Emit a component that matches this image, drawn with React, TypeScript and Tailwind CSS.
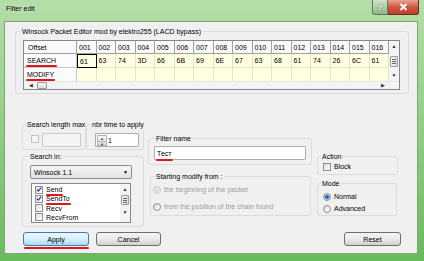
import React from "react";

const heads = ["001", "002", "003", "004", "005", "006", "007", "008", "009", "010", "011", "012", "013", "014", "015", "016"];
const bytes = ["61", "63", "74", "3D", "66", "6B", "69", "6E", "67", "63", "68", "61", "74", "26", "6C", "61"];

// red marker strokes drawn over the screenshot
function Mark({ className }: { className: string }) {
  return <span className={`absolute h-[2px] rounded-full bg-[#e3141b] ${className}`} />;
}

function Check({ on = false, dim = false }: { on?: boolean; dim?: boolean }) {
  return (
    <span
      className={`flex h-[8px] w-[8px] shrink-0 items-center justify-center border ${
        dim ? "border-[#c4c4c4] bg-[#f4f4f4]" : "border-[#8e8f8f] bg-linear-to-br from-[#dcdcdc] to-white"
      }`}
    >
      {on && (
        <svg width="7" height="7" viewBox="0 0 7 7">
          <path d="M1 3.6 L2.8 5.4 L6 1.2" fill="none" stroke="#21469b" strokeWidth="1.4" />
        </svg>
      )}
    </span>
  );
}

function Radio({ on = false, dim = false }: { on?: boolean; dim?: boolean }) {
  return (
    <span
      className={`flex h-[8px] w-[8px] shrink-0 items-center justify-center rounded-full border ${
        dim ? "border-[#c8c8c8] bg-[#f3f3f3]" : "border-[#8e8f8f] bg-linear-to-br from-[#dadada] to-white"
      }`}
    >
      {on && <span className="h-[4px] w-[4px] rounded-full bg-[#2f62ab] ring-1 ring-[#9fc0e6]" />}
      {dim && <span className="h-[4px] w-[4px] rounded-full bg-[#dcdcdc]" />}
    </span>
  );
}

// legend offset is measured from the fieldset's padding edge, hence the negative margins below
function Box({
  label,
  className,
  legend,
  children,
}: {
  label: string;
  className: string;
  legend: string;
  children?: React.ReactNode;
}) {
  return (
    <fieldset className={`min-w-0 rounded-[3px] border border-[#dcdcdc] ${className}`}>
      <legend className={`whitespace-nowrap px-[1px] leading-[9px] ${legend}`}>{label}</legend>
      {children}
    </fieldset>
  );
}

function Button({ label, main = false, className }: { label: string; main?: boolean; className: string }) {
  return (
    <div
      className={`relative flex h-[14px] items-center justify-center rounded-[3px] border ${
        main
          ? "border-[#3c7fb1] bg-linear-to-b from-[#eaf6fd] via-[#d9f0fc] to-[#a7d9f5]"
          : "border-[#707070] bg-linear-to-b from-[#f2f2f2] via-[#ebebeb] to-[#cfcfcf]"
      } ${className}`}
    >
      {label}
    </div>
  );
}

export default function App() {
  return (
    <div className="flex h-[261px] w-[424px] flex-col overflow-hidden bg-linear-to-b from-[#b4dea8] via-[#8fce82] to-[#69bb5b] font-['Liberation_Sans',Arial,sans-serif] text-[7px] leading-[9px] text-black">
      {/* title bar */}
      <div className="flex h-[22px] shrink-0 items-start">
        <span className="ml-[6px] mt-[4px] text-[7px] [text-shadow:0_0_4px_#e6f5e0]">Filter edit</span>
        <div className="ml-auto mr-[5px] flex">
          <div className="flex h-[15px] w-[16px] items-center justify-center rounded-bl-[3px] border border-t-0 border-[#5b7f55] bg-linear-to-b from-[#cfe5c8] to-[#8fb787] text-[8px] font-bold text-white [text-shadow:0_0_2px_#3b5a36]">
            ?
          </div>
          <div className="flex h-[15px] w-[31px] items-center justify-center rounded-br-[3px] border border-l-0 border-t-0 border-[#6d2a22] bg-linear-to-b from-[#e7a597] via-[#d0543f] to-[#c23b28]">
            <svg width="9" height="8" viewBox="0 0 9 8">
              <path d="M1.5 1 L7.5 7 M7.5 1 L1.5 7" stroke="white" strokeWidth="2" />
            </svg>
          </div>
        </div>
      </div>

      {/* client area */}
      <div className="ml-[5px] mr-[7px] flex h-[231px] flex-col bg-[#f0f0f0] outline outline-1 outline-[#7fa277]">
        <Box
          label="Winsock Packet Editor mod by elektro255 (LACD bypass)"
          className="ml-[10px] mt-[5px] w-[394px] pb-[3px] pl-[7px] pt-[4px]"
          legend="-ml-[3px] px-[2px]"
        >
          <div className="flex w-[377px] flex-col border border-[#828790] bg-white">
            <div className="flex">
              <div className="grid grid-cols-[53px_repeat(16,19.5px)] grid-rows-[13px_14px_13px]">
                <div className="flex items-center border-b border-r border-[#a0a0a0] bg-[#f9f9f9] pl-[4px]">Offset</div>
                {heads.map((h) => (
                  <div key={h} className="flex items-center border-b border-r border-[#a0a0a0] bg-[#f9f9f9] pl-[2px]">
                    {h}
                  </div>
                ))}
                <div className="relative flex items-center border-b border-r border-[#c8c8c8] bg-[#fbfbfb] pl-[3px]">
                  <span className="relative">
                    SEARCH
                    <Mark className="-bottom-[2px] -left-[1px] -right-[1px]" />
                  </span>
                </div>
                {bytes.map((b, i) => (
                  <div
                    key={i}
                    className={`flex items-center bg-[#ffffe1] pl-[2px] ${
                      i === 0 ? "border border-black" : "border-b border-r border-[#e3e3cb]"
                    }`}
                  >
                    {b}
                  </div>
                ))}
                <div className="relative flex items-center border-r border-[#c8c8c8] bg-[#fbfbfb] pl-[3px]">
                  <span className="relative">
                    MODIFY
                    <Mark className="-bottom-[2px] -left-[1px] -right-[1px]" />
                  </span>
                </div>
                {heads.map((h) => (
                  <div key={h} className="border-r border-[#e3e3cb] bg-[#ffffe1]" />
                ))}
              </div>
              {/* vertical scrollbar */}
              <div className="flex w-[10px] flex-col items-center bg-[#f4f4f4] text-[#333]">
                <span className="mt-[3px] text-[5px] leading-[5px]">▲</span>
                <div className="mt-[7px] flex h-[11px] w-[8px] flex-col items-center justify-center gap-[1px] rounded-[1px] border border-[#9c9c9c] bg-linear-to-r from-[#f8f8f8] to-[#dcdcdc]">
                  <span className="h-px w-[4px] bg-[#666]" />
                  <span className="h-px w-[4px] bg-[#666]" />
                  <span className="h-px w-[4px] bg-[#666]" />
                </div>
                <span className="mt-[6px] text-[5px] leading-[5px]">▼</span>
              </div>
            </div>
            {/* horizontal scrollbar */}
            <div className="flex h-[8px] items-center border-t border-[#e6e6e6] bg-[#f4f4f4] text-[#333]">
              <span className="ml-[5px] text-[5px] leading-[5px]">◀</span>
              <span className="ml-[4px] h-[7px] w-[10px] rounded-[1px] border border-[#9c9c9c] bg-linear-to-b from-[#f8f8f8] to-[#dcdcdc]" />
              <span className="ml-auto mr-[14px] text-[5px] leading-[5px]">▶</span>
            </div>
          </div>
        </Box>

        <div className="flex items-start">
          {/* left column */}
          <div className="ml-[17px] flex w-[122px] flex-col">
            <div className="mt-[26px] flex">
              <Box label="Search length max" className="h-[30px] w-[64px] pl-[8px] pt-[4px]" legend="-ml-[5px]">
                <div className="flex items-start">
                  <span className="mt-[2px]">
                    <Check dim />
                  </span>
                  <span className="ml-[3px] h-[14px] w-[39px] rounded-[1px] border border-[#c9c9c9] bg-[#f4f4f4]" />
                </div>
              </Box>
              <Box label="nbr time to apply" className="h-[30px] w-[58px] pl-[8px] pt-[4px]" legend="-ml-[4px]">
                <div className="flex h-[14px] w-[44px] items-center rounded-[1px] border border-[#abadb3] bg-white pl-px">
                  <div className="flex h-[11px] w-[10px] flex-col border border-[#b5b5b5] bg-linear-to-b from-[#f6f6f6] to-[#d8d8d8] text-[4px] leading-[5px] text-[#444]">
                    <span className="flex flex-1 items-center justify-center border-b border-[#b5b5b5]">▲</span>
                    <span className="flex flex-1 items-center justify-center">▼</span>
                  </div>
                  <span className="ml-[1px]">1</span>
                </div>
              </Box>
            </div>
            <Box label="Search in:" className="mt-[2px] h-[75px] w-[122px] pl-[7px] pt-[4px]" legend="-ml-[1px]">
              <div className="flex h-[14px] w-[102px] items-center rounded-[2px] border border-[#8d8d8d] bg-linear-to-b from-[#f7f7f7] to-[#e2e2e2] pl-[3px]">
                Winsock 1.1
                <span className="ml-auto mr-[3px] text-[5px]">▼</span>
              </div>
              <div className="ml-px mt-[4px] flex h-[40px] w-[100px] overflow-hidden border border-[#828790] bg-white">
                <div className="flex flex-1 flex-col pl-[3px] pt-px">
                  <div className="flex h-[12px] items-center gap-[3px]">
                    <Check on />
                    <span className="relative">
                      Send
                      <Mark className="-bottom-[2px] left-0 -right-px" />
                    </span>
                  </div>
                  <div className="flex h-[12px] items-center gap-[3px]">
                    <Check on />
                    <span className="relative">
                      SendTo
                      <Mark className="-bottom-[2px] left-0 -right-px" />
                    </span>
                  </div>
                  <div className="flex h-[12px] items-center gap-[3px]">
                    <Check />
                    <span>Recv</span>
                  </div>
                  <div className="flex h-[12px] items-center gap-[3px]">
                    <Check />
                    <span>RecvFrom</span>
                  </div>
                </div>
                <div className="flex w-[10px] flex-col items-center bg-[#f4f4f4] text-[#333]">
                  <span className="mt-[3px] text-[5px] leading-[5px]">▲</span>
                  <div className="mt-[3px] flex h-[10px] w-[8px] flex-col items-center justify-center gap-[1px] rounded-[1px] border border-[#9c9c9c] bg-linear-to-r from-[#f8f8f8] to-[#dcdcdc]">
                    <span className="h-px w-[4px] bg-[#666]" />
                    <span className="h-px w-[4px] bg-[#666]" />
                    <span className="h-px w-[4px] bg-[#666]" />
                  </div>
                  <span className="mt-[5px] text-[5px] leading-[5px]">▼</span>
                </div>
              </div>
            </Box>
          </div>

          {/* middle column */}
          <div className="ml-[4px] flex w-[164px] flex-col">
            <Box label="Filter name" className="mt-[40px] h-[31px] w-[164px] pl-[5px] pt-[3px]" legend="ml-[1px]">
              <div className="flex h-[14px] w-[152px] items-center rounded-[1px] border border-[#abadb3] bg-white pl-[2px]">
                <span className="relative">
                  Тест
                  <Mark className="-bottom-[3px] -left-px -right-[2px]" />
                </span>
              </div>
            </Box>
            <Box
              label="Starting modify from :"
              className="ml-[2px] mt-[7px] h-[44px] w-[161px] pl-[2px] pt-[4px]"
              legend="ml-[2px]"
            >
              <div className="flex flex-col gap-[8px] text-[#9c9c9c]">
                <div className="flex h-[9px] items-center gap-[3px]">
                  <Radio dim />
                  <span>the beginning of the packet</span>
                </div>
                <div className="flex h-[9px] items-center gap-[3px]">
                  <Radio />
                  <span>from the position of the chain found</span>
                </div>
              </div>
            </Box>
          </div>

          {/* right column */}
          <div className="ml-[5px] flex w-[81px] flex-col">
            <Box label="Action" className="mt-[58px] h-[23px] w-[81px] pl-[5px] pt-px" legend="-ml-[2px]">
              <div className="flex h-[9px] items-center gap-[3px]">
                <Check />
                <span>Block</span>
              </div>
            </Box>
            <Box label="Mode" className="mt-[4px] h-[37px] w-[80px] pl-[5px] pt-[4px]" legend="-ml-[2px]">
              <div className="flex flex-col gap-[3px]">
                <div className="flex h-[9px] items-center gap-[3px]">
                  <Radio on />
                  <span>Normal</span>
                </div>
                <div className="flex h-[9px] items-center gap-[3px]">
                  <Radio />
                  <span>Advanced</span>
                </div>
              </div>
            </Box>
          </div>
        </div>

        {/* buttons */}
        <div className="mb-[7px] mt-auto flex items-center">
          <Button label="Apply" main className="ml-[18px] w-[66px]" />
          <Button label="Cancel" className="ml-[7px] w-[65px]" />
          <Button label="Reset" className="ml-auto mr-[16px] w-[57px]" />
        </div>
        <div className="relative">
          <Mark className="-top-[6px] left-[19px] w-[65px]" />
        </div>
      </div>
    </div>
  );
}
